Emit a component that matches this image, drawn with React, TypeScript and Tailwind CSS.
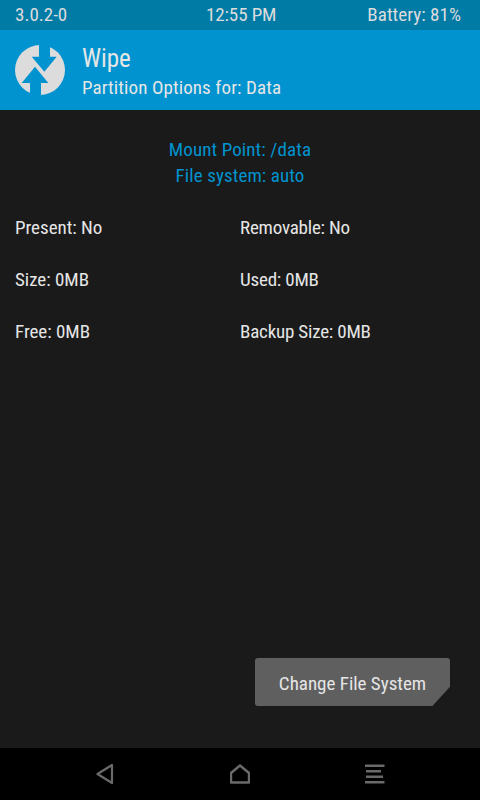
const infoRows = [
  ['Present: No', 'Removable: No'],
  ['Size: 0MB', 'Used: 0MB'],
  ['Free: 0MB', 'Backup Size: 0MB'],
]

function TeamWinLogo() {
  return (
    <svg viewBox="0 0 50 50" className="h-[50px] w-[50px] shrink-0">
      <circle cx="25" cy="25" r="25" fill="#dcdcdc" />
      <path d="M24 -1H35V11.7H41.7L29.4 26.7L16.7 11.7H24Z" fill="#0093cf" />
      <path d="M15 51H26V38H33.3L20 21.7L6.7 38H15Z" fill="#0093cf" />
    </svg>
  )
}

export default function App() {
  return (
    <div className="flex h-[800px] w-[480px] flex-col overflow-hidden bg-[#1a1a1a] font-['Roboto',sans-serif] text-[19px] text-[#e6e6e6] [font-stretch:75%]">
      <div className="flex h-[30px] items-center justify-between bg-[#007ba6] pl-[15px] pr-[19px] text-[#dcdcdc]">
        <span className="w-[100px]">3.0.2-0</span>
        <span className="tracking-[-0.1px]">12:55 PM</span>
        <span className="tracking-[0.05px]">Battery: 81%</span>
      </div>

      <div className="flex h-[80px] items-center gap-[17px] bg-[#0093cf] pl-[15px]">
        <TeamWinLogo />
        <div className="flex flex-col pt-[4px]">
          <span className="text-[25px] leading-[32px]">Wipe</span>
          <span className="leading-[26px] tracking-[0.11px]">Partition Options for: Data</span>
        </div>
      </div>

      <div className="flex flex-1 flex-col px-[15px] pt-[27px]">
        <div className="flex flex-col items-center text-[#0093cf] tracking-[0.1px]">
          <span className="leading-[26px]">Mount Point: /data</span>
          <span className="leading-[26px]">File system: auto</span>
        </div>
        <div className="mt-[26px] flex flex-col gap-[26px]">
          {infoRows.map(([left, right]) => (
            <div key={left} className="grid grid-cols-[225px_1fr] leading-[26px]">
              <span className="tracking-[-0.02px]">{left}</span>
              <span className="tracking-[-0.2px]">{right}</span>
            </div>
          ))}
        </div>
        <div className="mt-auto mb-[42px] flex justify-end pr-[15px]">
          <button
            type="button"
            className="h-[48px] w-[195px] rounded-[3px] bg-[#5f5f5f] pt-[5px] text-[#e6e6e6] [clip-path:polygon(0_0,100%_0,100%_60%,91%_100%,0_100%)]"
          >
            Change File System
          </button>
        </div>
      </div>

      <div className="flex h-[52px] items-center justify-center gap-[115px] bg-black text-[#6a6a6a]">
        <svg viewBox="0 0 20 20" className="h-[20px] w-[20px]" fill="none" stroke="currentColor" strokeWidth="2.2" strokeLinejoin="round">
          <path d="M17 1V19L2.5 10Z" />
        </svg>
        <svg viewBox="0 0 20 20" className="h-[20px] w-[20px]" fill="none" stroke="currentColor" strokeWidth="2.4" strokeLinejoin="round">
          <path d="M10 1.5L19 9V18.5H1V9Z" />
        </svg>
        <svg viewBox="0 0 20 20" className="h-[20px] w-[20px]" fill="currentColor">
          <rect x="0" y="0.5" width="19.5" height="2.5" />
          <rect x="1" y="6" width="15" height="2.5" />
          <rect x="1" y="11.5" width="17" height="2.5" />
          <rect x="0" y="17" width="19.5" height="2.5" />
        </svg>
      </div>
    </div>
  )
}
